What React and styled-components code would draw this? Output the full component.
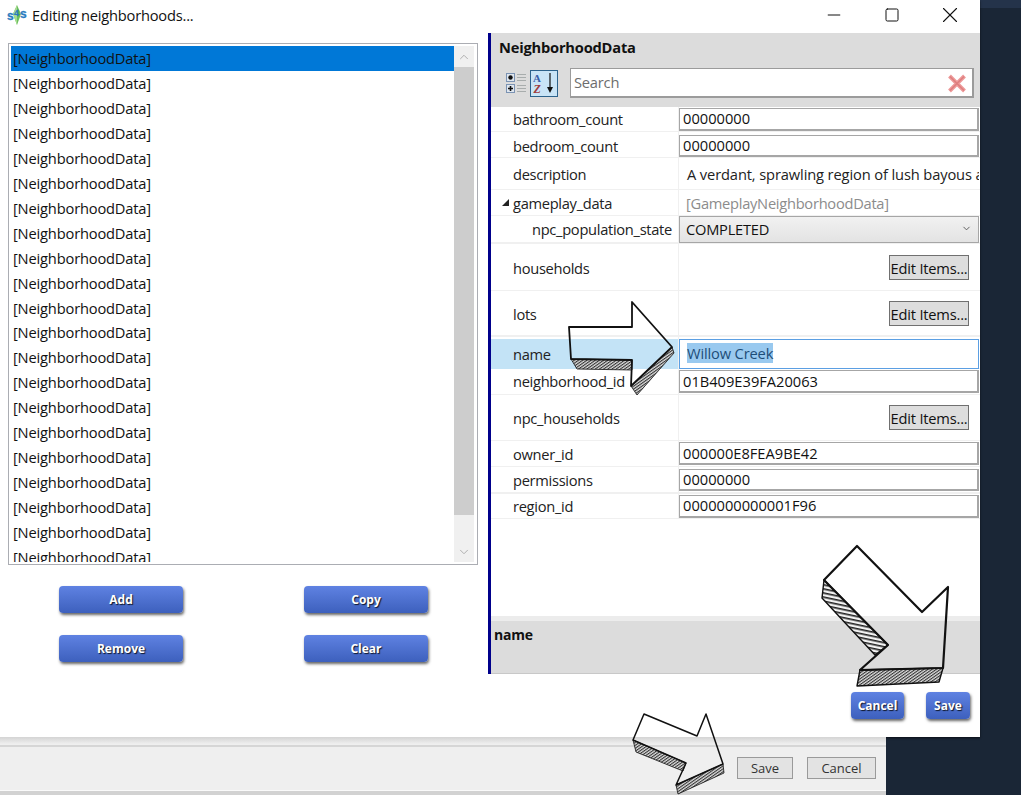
import React from "react";
import styled, { createGlobalStyle } from "styled-components";
import { ChevronUp, ChevronDown, Minus, Square, X } from "lucide-react";

const GlobalStyle = createGlobalStyle`
  html, body {
    margin: 0;
    padding: 0;
    background: #1a2636;
  }
  body {
    font-family: "Open Sans", "Noto Sans", sans-serif;
    overflow: hidden;
  }
`;

const Page = styled.div`
  position: relative;
  width: 1021px;
  height: 795px;
  overflow: hidden;
  background: #1a2636;
`;

const Dialog = styled.div`
  width: 980px;
  height: 737px;
  background: #fff;
  display: flex;
  flex-direction: column;
  box-shadow: 0 1px 2px rgba(0, 0, 0, 0.6);
  position: relative;
`;

const TitleBar = styled.div`
  height: 32px;
  flex: none;
  box-sizing: border-box;
  display: flex;
  align-items: center;
  padding: 0 5px 3px 7px;
  font-size: 14.67px;
  color: #111;
`;

const TitleText = styled.span`
  margin-left: 5px;
  flex: 1;
  letter-spacing: -0.2px;
`;

const WinButton = styled.div`
  width: 50px;
  height: 28px;
  margin-left: 8px;
  display: flex;
  align-items: center;
  justify-content: center;
  color: #111;
`;

const Body = styled.div`
  flex: 1;
  display: flex;
  min-height: 0;
`;

const LeftColumn = styled.div`
  width: 488px;
  flex: none;
  padding: 11px 10px 0 8px;
  box-sizing: border-box;
`;

const ListBox = styled.div`
  height: 522px;
  border: 1px solid #abadb3;
  box-sizing: border-box;
  padding: 2px 3px 2px 2px;
  display: flex;
  overflow: hidden;
`;

const ListItems = styled.div`
  flex: 1;
  overflow: hidden;
  min-width: 0;
`;

const ListItem = styled.div`
  height: 24.96px;
  line-height: 25px;
  font-size: 14.67px;
  letter-spacing: -0.17px;
  padding-left: 2px;
  color: #111;
  white-space: nowrap;
  background: ${(p) => (p.$selected ? "#0078d7" : "transparent")};
`;

const ScrollBar = styled.div`
  width: 20px;
  flex: none;
  display: flex;
  flex-direction: column;
  background: #f0f0f0;
`;

const ScrollEnd = styled.div`
  height: 21px;
  flex: none;
  display: flex;
  align-items: center;
  justify-content: center;
  color: #a6a6a6;
`;

const ScrollThumb = styled.div`
  height: 448px;
  flex: none;
  background: #cdcdcd;
`;

const ScrollGap = styled.div`
  flex: 1;
`;

const ActionGrid = styled.div`
  margin: 21px 0 0 51px;
  display: grid;
  grid-template-columns: 124px 124px;
  column-gap: 121px;
  row-gap: 22px;
`;

const BlueButton = styled.div`
  width: ${(p) => p.$width || "124px"};
  height: 27px;
  box-sizing: border-box;
  border-radius: 4px;
  background: linear-gradient(#5f82e2, #3d60bd);
  box-shadow: 1px 2px 3px rgba(0, 0, 0, 0.6);
  display: flex;
  align-items: center;
  justify-content: center;
  font-size: 12px;
  font-weight: 700;
  color: #fff;
  text-shadow: 1px 1px 1px rgba(0, 0, 0, 0.8);
`;

const PropPanel = styled.div`
  width: 492px;
  height: 641px;
  flex: none;
  box-sizing: border-box;
  border-left: 3px solid #00008b;
  margin-top: 1px;
  display: flex;
  flex-direction: column;
  background: #fff;
`;

const PropHeader = styled.div`
  height: 74px;
  flex: none;
  background: #dcdcdc;
  padding: 4px 5px 0 8px;
  box-sizing: border-box;
`;

const PropTitle = styled.div`
  font-size: 14.67px;
  font-weight: 700;
  color: #111;
  height: 20px;
  line-height: 20px;
  letter-spacing: -0.2px;
`;

const Toolbar = styled.div`
  margin-top: 11px;
  display: flex;
  align-items: center;
`;

const ToolIcon = styled.div`
  width: ${(p) => p.$width || 27}px;
  height: 27px;
  flex: none;
  box-sizing: border-box;
  margin-left: ${(p) => p.$left || "0"};
  display: flex;
  align-items: center;
  justify-content: center;
  background: ${(p) => (p.$active ? "#c9e4f6" : "transparent")};
  border: 1px solid ${(p) => (p.$active ? "#2c628b" : "transparent")};
`;

const SearchBox = styled.div`
  margin-left: 12px;
  width: 404px;
  height: 30px;
  box-sizing: border-box;
  border: 1px solid #9b9b9b;
  border-width: 1px 2px 2px 1px;
  background: #fff;
  display: flex;
  align-items: center;
  padding: 0 5px 0 3px;
  font-size: 14.67px;
  letter-spacing: -0.2px;
  color: #6d6d6d;
  justify-content: space-between;
`;

const SearchHint = styled.span`
  margin-bottom: 2px;
`;

const Rows = styled.div`
  flex: 1;
  display: flex;
  flex-direction: column;
  min-height: 0;
`;

const Row = styled.div`
  height: ${(p) => p.$h}px;
  flex: none;
  box-sizing: border-box;
  display: grid;
  grid-template-columns: 187px minmax(0, 1fr);
  border-bottom: ${(p) => p.$line || 1}px solid #f0f0f0;
`;

const RowLabel = styled.div`
  display: flex;
  align-items: center;
  box-sizing: border-box;
  padding-left: ${(p) => p.$indent || 22}px;
  padding-top: ${(p) => (p.$shift > 0 || p.$shift === undefined ? p.$shift ?? 1 : 0)}px;
  padding-bottom: ${(p) => (p.$shift < 0 ? -p.$shift : 0)}px;
  font-size: 14.67px;
  letter-spacing: -0.3px;
  color: #222;
  white-space: nowrap;
  position: relative;
  background: ${(p) => (p.$active ? "#c3e3f6" : "transparent")};
  margin-top: ${(p) => (p.$active ? "2px" : "0")};
`;

const Expander = styled.span`
  position: absolute;
  left: 11px;
  top: 9px;
  width: 0;
  height: 0;
  border-style: solid;
  border-width: 0 0 7px 7px;
  border-color: transparent transparent #222 transparent;
`;

const RowValue = styled.div`
  border-left: 1px solid #f0f0f0;
  display: flex;
  align-items: center;
  min-width: 0;
  padding-right: 1px;
  justify-content: ${(p) => (p.$end ? "flex-end" : "flex-start")};
`;

const ValueInput = styled.div`
  flex: 1;
  height: ${(p) => p.$h || 23}px;
  margin-top: ${(p) => p.$top || 0}px;
  box-sizing: border-box;
  border: 1px solid #a6a6a6;
  border-width: 1px 2px 2px 1px;
  display: flex;
  align-items: center;
  padding: 0 0 1px 3px;
  font-size: 14.67px;
  color: #111;
  min-width: 0;
  background: #fff;
`;

const FocusInput = styled(ValueInput)`
  height: 30px;
  margin-top: 2px;
  border: 1px solid #5b9fe3;
  padding: 0 0 2px 7px;
`;

const Selected = styled.span`
  background: #99c9ef;
  color: #1d4d78;
  line-height: 20px;
  letter-spacing: -0.15px;
`;

const PlainValue = styled.div`
  padding-left: ${(p) => p.$left || 8}px;
  padding-top: 1px;
  font-size: 14.67px;
  letter-spacing: ${(p) => p.$spacing ?? -0.12}px;
  color: ${(p) => p.$color || "#222"};
  white-space: nowrap;
  overflow: hidden;
  flex: 1;
`;

const SelectBox = styled.div`
  flex: 1;
  height: 27px;
  box-sizing: border-box;
  border: 1px solid #a6a6a6;
  background: linear-gradient(#f1f1f1, #e3e3e3);
  display: flex;
  align-items: center;
  justify-content: space-between;
  padding: 0 6px 2px 6px;
  font-size: 14.67px;
  letter-spacing: -0.25px;
  color: #111;
`;

const EditButton = styled.div`
  width: 80px;
  height: 25px;
  margin-right: 10px;
  box-sizing: border-box;
  border: 1px solid #707070;
  background: #dddddd;
  display: flex;
  align-items: center;
  justify-content: center;
  padding-top: 1px;
  font-size: 14.67px;
  letter-spacing: -0.2px;
  color: #111;
`;

const DescArea = styled.div`
  height: 58px;
  flex: none;
  box-sizing: border-box;
  border-top: 5px solid #ececec;
  border-bottom: 1px solid #c8c8c8;
  background: #dcdcdc;
  padding: 4px 3px;
  font-size: 14px;
  font-weight: 700;
  letter-spacing: -0.2px;
  color: #111;
`;

const DialogFooter = styled.div`
  position: absolute;
  right: 10px;
  bottom: 18px;
  display: flex;
  gap: 22px;
`;

const BackWindow = styled.div`
  width: 886px;
  height: 58px;
  box-sizing: border-box;
  background: linear-gradient(#d4d4d4, #efefef 7px, #efefef);
  border-bottom: 4px solid #d2d2d2;
  box-shadow: inset 0 -1px 0 #fafafa;
  display: flex;
  justify-content: flex-end;
  align-items: flex-start;
  gap: 14px;
  padding: 20px 10px 0 0;
  position: relative;
`;

const BackLine = styled.div`
  position: absolute;
  left: 0;
  right: 0;
  top: 8px;
  height: 2px;
  background: #d6d6d6;
`;

const GrayButton = styled.div`
  width: ${(p) => p.$width}px;
  height: 22px;
  box-sizing: border-box;
  border: 1px solid #9a9a9a;
  background: #e3e3e3;
  display: flex;
  align-items: center;
  justify-content: center;
  font-size: 13px;
  color: #333;
`;

const TopStrip = styled.div`
  position: absolute;
  left: 980px;
  top: 0;
  width: 41px;
  height: 8px;
  background: #24334a;
`;

const ArrowLayer = styled.svg`
  position: absolute;
  left: 0;
  top: 0;
  pointer-events: none;
`;

const rows = Array.from({ length: 21 });

function Logo() {
  return (
    <svg width="20" height="20" viewBox="0 0 20 20">
      <path d="M10 0 L14 9 L10 20 L6 9 Z" fill="#6cbf5c" />
      <path d="M10 0 L10 20 L6 9 Z" fill="#a5dc8e" />
      <g fontFamily="Liberation Sans, sans-serif" fontWeight="700" fill="#2a7cc0" stroke="#2a7cc0" strokeWidth="0.3">
        <text x="0" y="15" fontSize="12">s</text>
        <text x="7" y="11" fontSize="9">4</text>
        <text x="13" y="13" fontSize="12">s</text>
      </g>
    </svg>
  );
}

function CategoryIcon() {
  return (
    <svg width="24" height="24" viewBox="0 0 24 24">
      <rect x="2.500" y="2.500" width="8" height="8" fill="#dfe6ee" stroke="#7b93b3" />
      <rect x="2.500" y="13.500" width="8" height="8" fill="#dfe6ee" stroke="#7b93b3" />
      <circle cx="6.500" cy="6.500" r="2.200" fill="#111" />
      <path d="M4 17.500H9M6.500 15V20" stroke="#111" strokeWidth="1.600" />
      <path d="M13 3.500h9M13 6.500h9M13 9.500h9M13 14.500h9M13 17.500h9M13 20.500h9" stroke="#a8adad" strokeWidth="1" />
    </svg>
  );
}

function SortIcon() {
  return (
    <svg width="26" height="25" viewBox="0 0 26 25">
      <text x="2" y="11" fontFamily="Liberation Serif, serif" fontSize="11" fontWeight="700" fill="#3a5fa8">A</text>
      <text x="2.500" y="22" fontFamily="Liberation Serif, serif" fontSize="12" fontStyle="italic" fontWeight="700" fill="#a03c3c">Z</text>
      <path d="M19 2V18" stroke="#111" strokeWidth="1.200" />
      <path d="M16 16H22L19 22Z" fill="#111" />
    </svg>
  );
}

function ClearIcon() {
  return (
    <svg width="20" height="20" viewBox="0 0 20 20">
      <path d="M2.500 3 L17.500 18 M17.500 3 L2.500 18" stroke="#ee9a9a" strokeWidth="4" />
      <path d="M3 3.500 L17 17.500 M17 3.500 L3 17.500" stroke="#dd7f7f" strokeWidth="1.500" />
    </svg>
  );
}

function Arrows() {
  return (
    <ArrowLayer width="1021" height="795" viewBox="0 0 1021 795">
      <defs>
        <pattern id="hatch" width="2.400" height="2.400" patternUnits="userSpaceOnUse" patternTransform="rotate(-35)">
          <rect width="2.400" height="2.400" fill="#dedede" />
          <rect width="2.400" height="1.100" fill="#333" />
        </pattern>
        <pattern id="hatchB" width="4" height="4" patternUnits="userSpaceOnUse" patternTransform="rotate(12)">
          <rect width="4" height="4" fill="#f2f2f2" />
          <rect width="4" height="1.600" fill="#222" />
        </pattern>
      </defs>
      <g stroke="#111" strokeLinejoin="round">
        <g strokeWidth="1.800">
          <path d="M571 359L577 369L632 370L632 360Z" fill="url(#hatch)" strokeWidth="0.800" />
          <path d="M672 347L674 353L637 395L631 386Z" fill="url(#hatch)" strokeWidth="0.800" />
          <path d="M569 327L632 327L632 302L672 347L631 386L632 360L571 359Z" fill="none" />
        </g>
        <g strokeWidth="2.200">
          <path d="M824 580L822 598L875 655L888 645Z" fill="url(#hatchB)" strokeWidth="1.400" />
          <path d="M860 670L857 686L939 682L943 668Z" fill="url(#hatch)" strokeWidth="1.400" />
          <path d="M857 546L922 612L948 587L943 668L860 670L888 645L824 580Z" fill="none" />
        </g>
        <g strokeWidth="1.500">
          <path d="M633 740L636 752L683 771L686 763Z" fill="url(#hatch)" strokeWidth="0.800" />
          <path d="M676 785L678 794L724 773L723 764Z" fill="url(#hatch)" strokeWidth="0.800" />
          <path d="M644 714L697 736L706 714L723 764L676 785L686 763L633 740Z" fill="none" />
        </g>
      </g>
    </ArrowLayer>
  );
}

export default function App() {
  return (
    <Page>
      <GlobalStyle />
      <TopStrip />
      <Dialog>
        <TitleBar>
          <Logo />
          <TitleText>Editing neighborhoods...</TitleText>
          <WinButton><Minus size={20} strokeWidth={1.2} /></WinButton>
          <WinButton><Square size={16} strokeWidth={1.5} /></WinButton>
          <WinButton><X size={26} strokeWidth={1} /></WinButton>
        </TitleBar>
        <Body>
          <LeftColumn>
            <ListBox>
              <ListItems>
                {rows.map((_, i) => (
                  <ListItem key={i} $selected={i === 0}>[NeighborhoodData]</ListItem>
                ))}
              </ListItems>
              <ScrollBar>
                <ScrollEnd><ChevronUp size={14} strokeWidth={1.5} /></ScrollEnd>
                <ScrollThumb />
                <ScrollGap />
                <ScrollEnd><ChevronDown size={14} strokeWidth={1.5} /></ScrollEnd>
              </ScrollBar>
            </ListBox>
            <ActionGrid>
              <BlueButton>Add</BlueButton>
              <BlueButton>Copy</BlueButton>
              <BlueButton>Remove</BlueButton>
              <BlueButton>Clear</BlueButton>
            </ActionGrid>
          </LeftColumn>
          <PropPanel>
            <PropHeader>
              <PropTitle>NeighborhoodData</PropTitle>
              <Toolbar>
                <ToolIcon $left="3px" $width={28}><CategoryIcon /></ToolIcon>
                <ToolIcon $active $width={28}><SortIcon /></ToolIcon>
                <SearchBox>
                  <SearchHint>Search</SearchHint>
                  <ClearIcon />
                </SearchBox>
              </Toolbar>
            </PropHeader>
            <Rows>
              <Row $h={25}>
                <RowLabel $shift={-1}>bathroom_count</RowLabel>
                <RowValue><ValueInput>00000000</ValueInput></RowValue>
              </Row>
              <Row $h={26}>
                <RowLabel $shift={3}>bedroom_count</RowLabel>
                <RowValue><ValueInput $h={22} $top={2}>00000000</ValueInput></RowValue>
              </Row>
              <Row $h={32}>
                <RowLabel>description</RowLabel>
                <RowValue><PlainValue>A verdant, sprawling region of lush bayous and</PlainValue></RowValue>
              </Row>
              <Row $h={26} $line={0}>
                <RowLabel>
                  <Expander />
                  gameplay_data
                </RowLabel>
                <RowValue><PlainValue $left={7} $spacing={-0.27} $color="#8c8c8c">[GameplayNeighborhoodData]</PlainValue></RowValue>
              </Row>
              <Row $h={28} $line={2}>
                <RowLabel $indent={41} $shift={-1}>npc_population_state</RowLabel>
                <RowValue><SelectBox>COMPLETED<ChevronDown size={11} strokeWidth={2} color="#555" /></SelectBox></RowValue>
              </Row>
              <Row $h={47}>
                <RowLabel>households</RowLabel>
                <RowValue $end><EditButton>Edit Items...</EditButton></RowValue>
              </Row>
              <Row $h={46} $line={2}>
                <RowLabel>lots</RowLabel>
                <RowValue $end><EditButton>Edit Items...</EditButton></RowValue>
              </Row>
              <Row $h={32} $line={0}>
                <RowLabel $active $shift={-1}>name</RowLabel>
                <RowValue>
                  <FocusInput><Selected>Willow Creek</Selected></FocusInput>
                </RowValue>
              </Row>
              <Row $h={26}>
                <RowLabel $shift={-1}>neighborhood_id</RowLabel>
                <RowValue><ValueInput>01B409E39FA20063</ValueInput></RowValue>
              </Row>
              <Row $h={46}>
                <RowLabel>npc_households</RowLabel>
                <RowValue $end><EditButton>Edit Items...</EditButton></RowValue>
              </Row>
              <Row $h={26}>
                <RowLabel>owner_id</RowLabel>
                <RowValue><ValueInput>000000E8FEA9BE42</ValueInput></RowValue>
              </Row>
              <Row $h={27} $line={2}>
                <RowLabel>permissions</RowLabel>
                <RowValue><ValueInput $h={22}>00000000</ValueInput></RowValue>
              </Row>
              <Row $h={25}>
                <RowLabel $shift={-1}>region_id</RowLabel>
                <RowValue><ValueInput>0000000000001F96</ValueInput></RowValue>
              </Row>
            </Rows>
            <DescArea>name</DescArea>
          </PropPanel>
        </Body>
        <DialogFooter>
          <BlueButton $width="53px">Cancel</BlueButton>
          <BlueButton $width="44px">Save</BlueButton>
        </DialogFooter>
      </Dialog>
      <BackWindow>
        <BackLine />
        <GrayButton $width={56}>Save</GrayButton>
        <GrayButton $width={69}>Cancel</GrayButton>
      </BackWindow>
      <Arrows />
    </Page>
  );
}
